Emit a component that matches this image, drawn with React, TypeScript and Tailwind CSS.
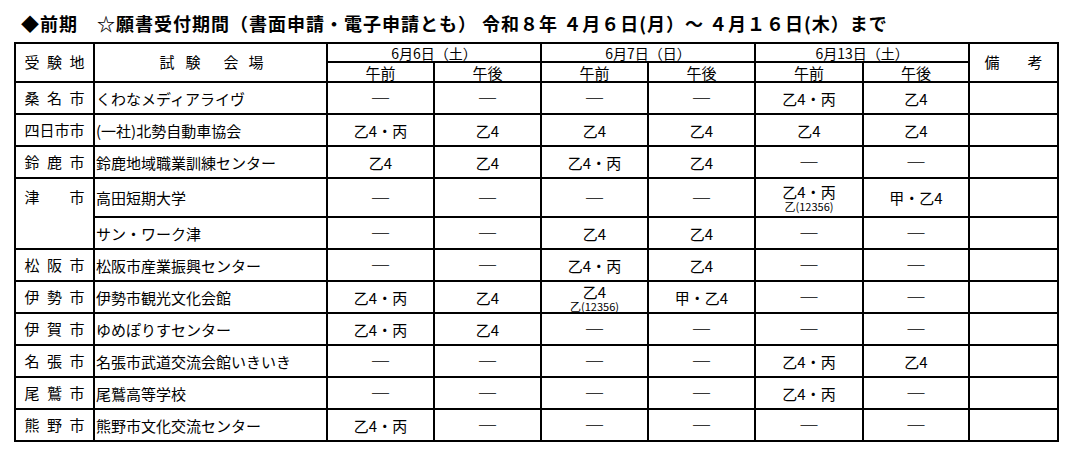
import React from "react";

type Cell = string | [string, string];

interface Row {
  city?: string[];
  cityRowSpan?: number;
  venue: string;
  cells: Cell[];
  h: string;
}

const D = "―";

const rows: Row[] = [
  { city: ["桑", "名", "市"], venue: "くわなメディアライヴ", cells: [D, D, D, D, "乙4・丙", "乙4"], h: "h-[32px]" },
  { city: ["四", "日", "市", "市"], venue: "(一社)北勢自動車協会", cells: ["乙4・丙", "乙4", "乙4", "乙4", "乙4", "乙4"], h: "h-[32px]" },
  { city: ["鈴", "鹿", "市"], venue: "鈴鹿地域職業訓練センター", cells: ["乙4", "乙4", "乙4・丙", "乙4", D, D], h: "h-[32px]" },
  { city: ["津", "市"], cityRowSpan: 2, venue: "高田短期大学", cells: [D, D, D, D, ["乙4・丙", "乙(12356)"], "甲・乙4"], h: "h-[39px]" },
  { venue: "サン・ワーク津", cells: [D, D, "乙4", "乙4", D, D], h: "h-[32px]" },
  { city: ["松", "阪", "市"], venue: "松阪市産業振興センター", cells: [D, D, "乙4・丙", "乙4", D, D], h: "h-[32px]" },
  { city: ["伊", "勢", "市"], venue: "伊勢市観光文化会館", cells: ["乙4・丙", "乙4", ["乙4", "乙(12356)"], "甲・乙4", D, D], h: "h-[32px]" },
  { city: ["伊", "賀", "市"], venue: "ゆめぽりすセンター", cells: ["乙4・丙", "乙4", D, D, D, D], h: "h-[32px]" },
  { city: ["名", "張", "市"], venue: "名張市武道交流会館いきいき", cells: [D, D, D, D, "乙4・丙", "乙4"], h: "h-[32px]" },
  { city: ["尾", "鷲", "市"], venue: "尾鷲高等学校", cells: [D, D, D, D, "乙4・丙", D], h: "h-[32px]" },
  { city: ["熊", "野", "市"], venue: "熊野市文化交流センター", cells: ["乙4・丙", D, D, D, D, D], h: "h-[32px]" },
];

const bd = "border-2 border-black";

function CityName({ chars }: { chars: string[] }) {
  return (
    <div className="mx-auto flex w-[60px] justify-between">
      {chars.map((c, i) => (
        <span key={i}>{c}</span>
      ))}
    </div>
  );
}

function DataCell({ v }: { v: Cell }) {
  if (Array.isArray(v)) {
    return (
      <td className={`${bd} p-0 text-center align-middle`}>
        <div className="text-[15px] leading-[17px]">{v[0]}</div>
        <div className="text-[11px] leading-[12px]">{v[1]}</div>
      </td>
    );
  }
  if (v === D) {
    return (
      <td className={`${bd} p-0 text-center align-middle text-[20px] leading-none`}>{v}</td>
    );
  }
  return <td className={`${bd} p-0 text-center align-middle text-[15px] leading-none`}>{v}</td>;
}

export default function App() {
  return (
    <div
      className="h-[452px] w-[1070px] overflow-hidden bg-white text-black"
      style={{ fontFamily: '"Noto Sans CJK JP", "Noto Sans", sans-serif' }}
    >
      <div className="flex h-[42px] items-center whitespace-nowrap pl-[21px] pt-[4px] text-[18px] font-bold leading-none tracking-[1px]">
        ◆前期　☆願書受付期間（書面申請・電子申請とも） 令和８年 ４月６日(月）～ ４月１６日(木）まで
      </div>
      <table className="ml-[14px] w-[1043px] table-fixed border-collapse">
        <colgroup>
          <col className="w-[79px]" />
          <col className="w-[233px]" />
          <col className="w-[107px]" />
          <col className="w-[107px]" />
          <col className="w-[107px]" />
          <col className="w-[107px]" />
          <col className="w-[108px]" />
          <col className="w-[106px]" />
          <col className="w-[89px]" />
        </colgroup>
        <thead>
          <tr className="h-[19px]">
            <th rowSpan={2} className={`${bd} p-0 align-middle text-[15px] font-normal`}>
              <CityName chars={["受", "験", "地"]} />
            </th>
            <th rowSpan={2} className={`${bd} p-0 align-middle text-[15px] font-normal`}>
              <div className="flex justify-center pl-[2px]">
                <span>試</span>
                <span className="ml-[11px]">験</span>
                <span className="ml-[23px]">会</span>
                <span className="ml-[10px]">場</span>
              </div>
            </th>
            {["6月6日（土）", "6月7日（日）", "6月13日（土）"].map((d) => (
              <th key={d} colSpan={2} className={`${bd} p-0 align-middle text-[14px] font-normal leading-none`}>
                {d}
              </th>
            ))}
            <th rowSpan={2} className={`${bd} p-0 align-middle text-[15px] font-normal`}>
              <div className="mx-auto flex w-[58px] justify-between">
                <span>備</span>
                <span>考</span>
              </div>
            </th>
          </tr>
          <tr className="h-[20px]">
            {["午前", "午後", "午前", "午後", "午前", "午後"].map((t, i) => (
              <th key={i} className={`${bd} p-0 align-middle text-[15px] font-normal leading-none`}>
                {t}
              </th>
            ))}
          </tr>
        </thead>
        <tbody>
          {rows.map((r, i) => (
            <tr key={i} className={r.h}>
              {r.city && (
                <td rowSpan={r.cityRowSpan ?? 1} className={`${bd} p-0 text-[15px] ${r.cityRowSpan ? "align-top" : "align-middle"}`}>
                  {r.cityRowSpan ? (
                    <div className="flex h-[37px] items-center">
                      <CityName chars={r.city} />
                    </div>
                  ) : (
                    <CityName chars={r.city} />
                  )}
                </td>
              )}
              <td className={`${bd} whitespace-nowrap py-0 pl-[1px] pr-0 text-left align-middle text-[15px] leading-none`}>
                {r.venue}
              </td>
              {r.cells.map((c, j) => (
                <DataCell key={j} v={c} />
              ))}
              <td className={`${bd} p-0`} />
            </tr>
          ))}
        </tbody>
      </table>
    </div>
  );
}
